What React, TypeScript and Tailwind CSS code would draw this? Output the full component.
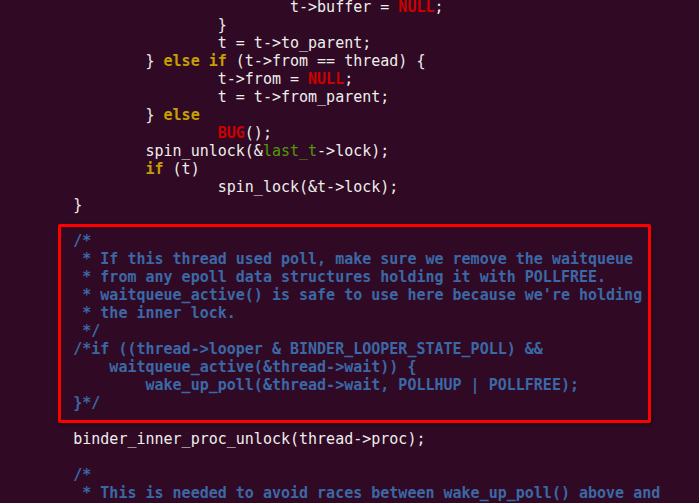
type Seg = { t: string; c?: "kw" | "red" | "grn" | "cmt" };

const T = "        ";

const lines: Seg[][] = [
  [{ t: T + T + T + T + "t->buffer = " }, { t: "NULL", c: "red" }, { t: ";" }],
  [{ t: T + T + T + "}" }],
  [{ t: T + T + T + "t = t->to_parent;" }],
  [{ t: T + T + "} " }, { t: "else if", c: "kw" }, { t: " (t->from == thread) {" }],
  [{ t: T + T + T + "t->from = " }, { t: "NULL", c: "red" }, { t: ";" }],
  [{ t: T + T + T + "t = t->from_parent;" }],
  [{ t: T + T + "} " }, { t: "else", c: "kw" }],
  [{ t: T + T + T }, { t: "BUG", c: "red" }, { t: "();" }],
  [{ t: T + T + "spin_unlock(&" }, { t: "last_t", c: "grn" }, { t: "->lock);" }],
  [{ t: T + T }, { t: "if", c: "kw" }, { t: " (t)" }],
  [{ t: T + T + T + "spin_lock(&t->lock);" }],
  [{ t: T + "}" }],
  [],
  [{ t: T + "/*", c: "cmt" }],
  [{ t: T + " * If this thread used poll, make sure we remove the waitqueue", c: "cmt" }],
  [{ t: T + " * from any epoll data structures holding it with POLLFREE.", c: "cmt" }],
  [{ t: T + " * waitqueue_active() is safe to use here because we're holding", c: "cmt" }],
  [{ t: T + " * the inner lock.", c: "cmt" }],
  [{ t: T + " */", c: "cmt" }],
  [{ t: T + "/*if ((thread->looper & BINDER_LOOPER_STATE_POLL) &&", c: "cmt" }],
  [{ t: T + "    waitqueue_active(&thread->wait)) {", c: "cmt" }],
  [{ t: T + T + "wake_up_poll(&thread->wait, POLLHUP | POLLFREE);", c: "cmt" }],
  [{ t: T + "}*/", c: "cmt" }],
  [],
  [{ t: T + "binder_inner_proc_unlock(thread->proc);" }],
  [],
  [{ t: T + "/*", c: "cmt" }],
  [{ t: T + " * This is needed to avoid races between wake_up_poll() above and", c: "cmt" }],
];

const tone = (c?: Seg["c"]) => {
  if (c === "kw") return "text-[#c4a000] font-bold";
  if (c === "red") return "text-[#cc0000] font-bold";
  if (c === "grn") return "text-[#4e9a06]";
  if (c === "cmt") return "text-[#3b68a6] font-bold";
  return "";
};

export default function App() {
  return (
    <div className="relative w-[699px] h-[503px] overflow-hidden bg-[#300a24] text-[#eeeeec] font-['DejaVu_Sans_Mono',monospace] text-[15px] leading-[18px]">
      <div className="pl-[1px] -mt-[2px] flex flex-col">
        {lines.map((segs, i) => (
          <div key={i} className="h-[18px] whitespace-pre">
            {segs.map((s, j) => (
              <span key={j} className={tone(s.c)}>
                {s.t}
              </span>
            ))}
          </div>
        ))}
      </div>
      {/* annotation box */}
      <div className="absolute left-[58px] top-[224px] w-[593px] h-[199px] border-[3px] border-[#ff0000] rounded-[2px] shadow-[1px_2px_4px_rgba(0,0,0,0.45)]" />
    </div>
  );
}
